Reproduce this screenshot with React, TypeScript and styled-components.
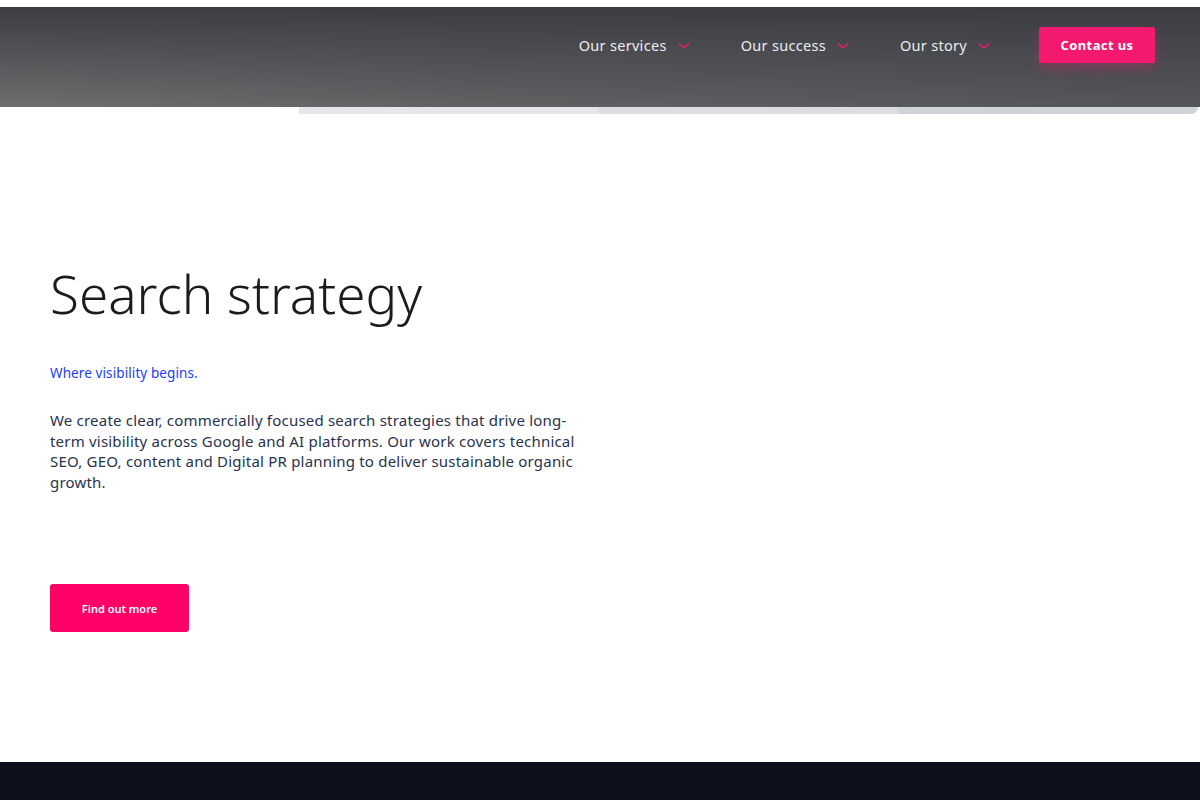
import React from 'react';
import styled, {createGlobalStyle} from 'styled-components';

const GlobalStyle = createGlobalStyle`
  html, body {
    margin: 0;
    padding: 0;
    background: #ffffff;
  }
  body {
    font-family: "Noto Sans", "Liberation Sans", sans-serif;
    -webkit-font-smoothing: antialiased;
  }
  * {
    box-sizing: border-box;
  }
`;

const colors = {
    pink: '#f2196e',
    hotPink: '#ff0066',
    blue: '#1a3cff',
    ink: '#1b1b1d',
    body: '#27334f',
    navText: '#ececee',
    footer: '#0c101b',
};

const navItems = ['Our services', 'Our success', 'Our story'];

const Chevron: React.FC = () => (
    <ChevronSvg viewBox="0 0 12 8" aria-hidden>
        <path d="M1 1.5 L6 6 L11 1.5" fill="none" stroke={colors.pink} strokeWidth="1.6"/>
    </ChevronSvg>
);

export default function App() {
    return (
        <>
            <GlobalStyle/>
            <Page>
                <Header>
                    <Bar>
                        <Nav>
                            {navItems.map(item => (
                                <NavItem key={item}>
                                    {item}
                                    <Chevron/>
                                </NavItem>
                            ))}
                        </Nav>
                        <ContactButton>Contact us</ContactButton>
                    </Bar>
                    <Tabs>
                        <Tab shade="transparent"/>
                        <Tab shade="#e5e6e9"/>
                        <Tab shade="#dcdde0"/>
                        <Tab shade="#d0d3d7" last/>
                    </Tabs>
                </Header>

                <Hero>
                    <Title>Search strategy</Title>
                    <Tagline>Where visibility begins.</Tagline>
                    <Copy>
                        We create clear, commercially focused search strategies that drive long-term
                        visibility across Google and AI platforms. Our work covers technical SEO, GEO,
                        content and Digital PR planning to deliver sustainable organic growth.
                    </Copy>
                    <MoreButton>Find out more</MoreButton>
                </Hero>

                <Footer/>
            </Page>
        </>
    );
}

const Page = styled.div`
  display: flex;
  flex-direction: column;
  min-height: 800px;
  padding-top: 7px;
`;

const Header = styled.header`
  display: flex;
  flex-direction: column;
`;

const Bar = styled.div`
  height: 100px;
  display: flex;
  align-items: flex-start;
  justify-content: flex-end;
  padding: 20px 45px 0 0;
  background:
    linear-gradient(to bottom, #3c3d42 0%, rgba(60, 61, 66, 0) 100%),
    linear-gradient(to right, #6e6e70 0%, #606063 45%, #54555a 100%);
`;

const Nav = styled.nav`
  display: flex;
  align-items: center;
  gap: 51px;
  margin-right: 49px;
  height: 36px;
`;

const NavItem = styled.div`
  display: flex;
  align-items: center;
  gap: 11px;
  color: ${colors.navText};
  font-size: 14.5px;
  font-weight: 400;
  letter-spacing: 0.3px;
  cursor: pointer;
`;

const ChevronSvg = styled.svg`
  width: 12px;
  height: 8px;
  margin-top: 2px;
`;

const ContactButton = styled.button`
  height: 36px;
  width: 116px;
  border: none;
  border-radius: 2px;
  background: ${colors.pink};
  color: #ffffff;
  font-family: inherit;
  font-size: 13px;
  font-weight: 700;
  letter-spacing: 0.4px;
  box-shadow: 0 6px 12px rgba(242, 25, 110, 0.3);
  cursor: pointer;
`;

const Tabs = styled.div`
  display: grid;
  grid-template-columns: 299px 300px 299px 1fr;
  height: 7px;
`;

const Tab = styled.div<{ shade: string; last?: boolean }>`
  background: ${props => props.shade};
  border-bottom-right-radius: ${props => props.last ? '8px' : '0'};
  margin-right: ${props => props.last ? '2px' : '0'};
`;

const Hero = styled.main`
  flex: 1;
  display: flex;
  flex-direction: column;
  align-items: flex-start;
  padding: 150px 50px 130px;
`;

const Title = styled.h1`
  margin: 0;
  font-family: "Noto Sans", sans-serif;
  font-size: 53px;
  font-weight: 300;
  line-height: 60px;
  color: ${colors.ink};
`;

const Tagline = styled.p`
  margin: 39px 0 0;
  font-size: 13.5px;
  line-height: 20px;
  letter-spacing: 0.1px;
  color: ${colors.blue};
`;

const Copy = styled.p`
  margin: 27px 0 0;
  max-width: 530px;
  font-size: 15px;
  line-height: 20.5px;
  letter-spacing: 0.2px;
  color: ${colors.body};
`;

const MoreButton = styled.button`
  margin-top: 92px;
  width: 139px;
  height: 48px;
  border: none;
  border-radius: 3px;
  background: ${colors.hotPink};
  color: #ffffff;
  font-family: inherit;
  font-size: 11px;
  font-weight: 600;
  cursor: pointer;
`;

const Footer = styled.footer`
  height: 38px;
  background: ${colors.footer};
`;
